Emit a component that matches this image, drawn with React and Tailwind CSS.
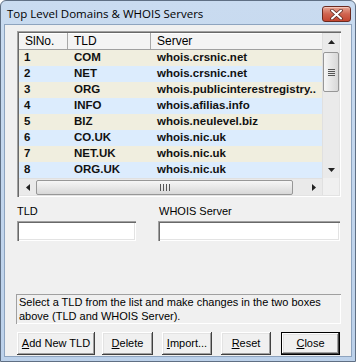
import React from "react";

const rows = [
  ["1", "COM", "whois.crsnic.net"],
  ["2", "NET", "whois.crsnic.net"],
  ["3", "ORG", "whois.publicinterestregistry.."],
  ["4", "INFO", "whois.afilias.info"],
  ["5", "BIZ", "whois.neulevel.biz"],
  ["6", "CO.UK", "whois.nic.uk"],
  ["7", "NET.UK", "whois.nic.uk"],
  ["8", "ORG.UK", "whois.nic.uk"],
];

const sunken =
  "shadow-[inset_1px_1px_0_#a0a0a0,inset_2px_2px_0_#696969,inset_-1px_-1px_0_#ffffff,inset_-2px_-2px_0_#e3e3e3]";
const raised =
  "shadow-[inset_-1px_-1px_0_#404040,inset_1px_1px_0_#ffffff,inset_-2px_-2px_0_#a0a0a0,inset_2px_2px_0_#e3e3e3]";

function Btn({ children, w, def }) {
  return (
    <div
      className={`h-[23px] ${w} flex items-center justify-center bg-[#f0f0f0] text-[11px] text-black ${
        def ? "border border-black" : ""
      } ${raised}`}
    >
      {children}
    </div>
  );
}

export default function App() {
  return (
    <div
      className="w-[356px] h-[362px] bg-gradient-to-b from-[#c9dbf0] to-[#bcd1ea] border border-[#5f6f84] rounded-t-[6px] flex flex-col overflow-hidden"
      style={{ fontFamily: '"Liberation Sans", Arial, sans-serif' }}
    >
      {/* title bar */}
      <div className="h-[23px] flex items-center justify-between pl-[6px] pr-[4px] shrink-0">
        <span
          className="text-[11.5px] text-black leading-none mt-[3px]"
          style={{ fontFamily: '"Open Sans", "Noto Sans", sans-serif' }}
        >
          Top Level Domains &amp; WHOIS Servers
        </span>
        <div className="w-[29px] h-[16px] mt-[3px] rounded-[3px] border border-[#6b2a20] bg-gradient-to-b from-[#e6a594] via-[#cf6450] to-[#c4452f] flex items-center justify-center shadow-[inset_0_1px_0_#f3c6ba]">
          <svg width="13" height="11" viewBox="0 0 13 11">
            <path d="M2 1.5 L11 9.5 M11 1.5 L2 9.5" stroke="#5a2a22" strokeWidth="3.6" strokeLinecap="round" />
            <path d="M2 1.5 L11 9.5 M11 1.5 L2 9.5" stroke="#ffffff" strokeWidth="2" strokeLinecap="round" />
          </svg>
        </div>
      </div>

      {/* client area */}
      <div className="mx-[3px] mb-[4px] flex-1 bg-[#f0f0f0] border border-[#8ea4bf] flex flex-col pl-[12px] pt-[6px]">
        {/* list view */}
        <div className={`w-[324px] h-[166px] bg-white p-[2px] ${sunken} flex`}>
          <div className="w-[303px] flex flex-col">
            {/* header */}
            <div className="h-[17px] flex text-[12px] text-black bg-[#f4f4f4] border-b border-[#a0a0a0] shadow-[inset_0_1px_0_#ffffff]">
              <div className="w-[49px] pl-[6px] flex items-center border-r border-[#a8a8a8]">SlNo.</div>
              <div className="w-[83px] pl-[6px] flex items-center border-r border-[#a8a8a8]">TLD</div>
              <div className="flex-1 pl-[6px] flex items-center">Server</div>
            </div>
            {/* rows */}
            <div className="flex flex-col">
              {rows.map((r, i) => (
                <div
                  key={r[0]}
                  className={`h-[16px] flex items-center text-[11.5px] font-bold text-[#111] ${
                    i % 2 === 0 ? "bg-[#f0eedf]" : "bg-[#dcecfd]"
                  }`}
                >
                  <div className="w-[49px] pl-[5px]">{r[0]}</div>
                  <div className="w-[83px] pl-[6px]">{r[1]}</div>
                  <div className="flex-1 pl-[6px] whitespace-nowrap overflow-hidden">{r[2]}</div>
                </div>
              ))}
            </div>
            {/* horizontal scrollbar */}
            <div className="h-[17px] bg-[#eaeaea] flex items-center border-t border-[#e0e0e0]">
              <div className="w-[17px] h-full flex items-center justify-center">
                <svg width="4" height="7" viewBox="0 0 4 7"><path d="M4 0 L0 3.5 L4 7 Z" fill="#222" /></svg>
              </div>
              <div className="w-[257px] h-[15px] rounded-[2px] border border-[#979797] bg-gradient-to-b from-[#f6f6f6] to-[#d8d8d8] flex items-center justify-center gap-[2px]">
                <div className="w-px h-[7px] bg-[#555]" />
                <div className="w-px h-[7px] bg-[#555]" />
                <div className="w-px h-[7px] bg-[#555]" />
                <div className="w-px h-[7px] bg-[#555]" />
              </div>
              <div className="flex-1" />
              <div className="w-[17px] h-full flex items-center justify-center">
                <svg width="4" height="7" viewBox="0 0 4 7"><path d="M0 0 L4 3.5 L0 7 Z" fill="#222" /></svg>
              </div>
            </div>
          </div>
          {/* vertical scrollbar */}
          <div className="w-[17px] flex flex-col bg-[#eaeaea] border-l border-[#e0e0e0]">
            <div className="h-[17px] flex items-center justify-center">
              <svg width="7" height="4" viewBox="0 0 7 4"><path d="M0 4 L3.5 0 L7 4 Z" fill="#222" /></svg>
            </div>
            <div className="h-[40px] mt-[2px] rounded-[2px] border border-[#979797] bg-gradient-to-r from-[#f6f6f6] to-[#d8d8d8] flex flex-col items-center justify-center gap-[1px]">
              <div className="w-[7px] h-px bg-[#555]" />
              <div className="w-[7px] h-px bg-[#555]" />
              <div className="w-[7px] h-px bg-[#555]" />
              <div className="w-[7px] h-px bg-[#555]" />
            </div>
            <div className="flex-1" />
            <div className="h-[17px] flex items-center justify-center">
              <svg width="7" height="4" viewBox="0 0 7 4"><path d="M0 0 L3.5 4 L7 0 Z" fill="#222" /></svg>
            </div>
            <div className="h-[17px] bg-[#f0f0f0]" />
          </div>
        </div>

        {/* labels + inputs */}
        <div className="flex mt-[8px] text-[11px] text-black">
          <div className="w-[141px] flex flex-col">
            <span className="leading-[13px]">TLD</span>
            <div className={`mt-[3px] w-[119px] h-[20px] bg-white ${sunken}`} />
          </div>
          <div className="flex flex-col">
            <span className="leading-[13px] pl-[1px]">WHOIS Server</span>
            <div className={`mt-[3px] w-[182px] h-[20px] bg-white ${sunken}`} />
          </div>
        </div>

        {/* status */}
        <div className="mt-[53px] -ml-[1px] w-[325px] h-[30px] shadow-[inset_1px_1px_0_#a0a0a0,inset_-1px_-1px_0_#ffffff] px-[3px] pt-[1px] text-[11px] leading-[14px] text-black">
          Select a TLD from the list and make changes in the two boxes above (TLD and WHOIS Server).
        </div>

        {/* buttons */}
        <div className="mt-[8px] flex">
          <Btn w="w-[78px]"><span><u>A</u>dd New TLD</span></Btn>
          <div className="w-[7px]" />
          <Btn w="w-[51px]"><span><u>D</u>elete</span></Btn>
          <div className="w-[9px]" />
          <Btn w="w-[50px]"><span><u>I</u>mport...</span></Btn>
          <div className="w-[9px]" />
          <Btn w="w-[50px]"><span><u>R</u>eset</span></Btn>
          <div className="w-[10px]" />
          <Btn w="w-[59px]" def><span><u>C</u>lose</span></Btn>
        </div>
      </div>
    </div>
  );
}
